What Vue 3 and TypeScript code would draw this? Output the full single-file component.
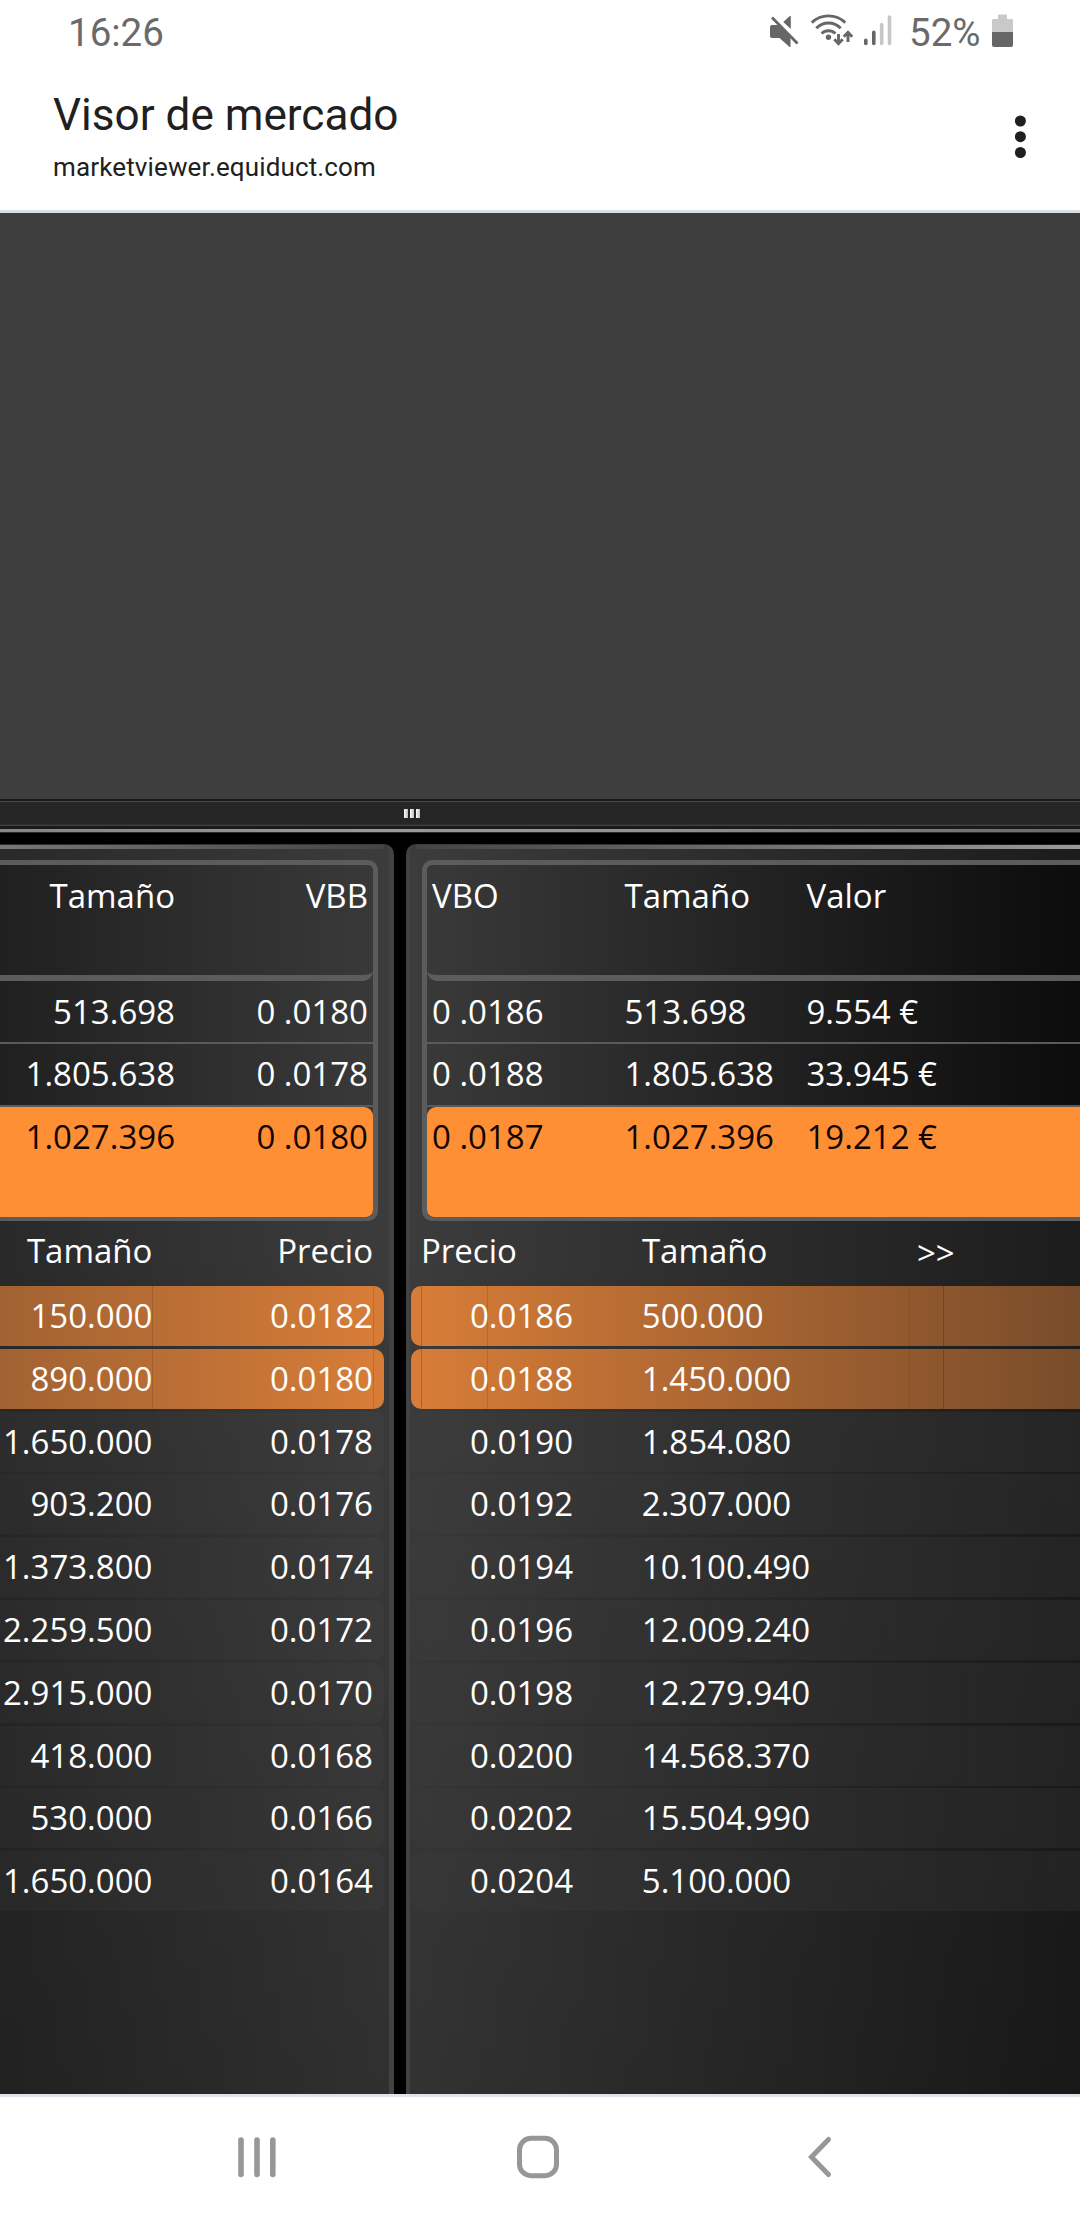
<script setup lang="ts">
interface BestRow {
  price: string
  size: string
  value?: string
}
interface DepthRow {
  price: string
  size: string
}

const bestBids: BestRow[] = [
  { size: '513.698', price: '0 .0180' },
  { size: '1.805.638', price: '0 .0178' },
  { size: '1.027.396', price: '0 .0180' },
]
const bestOffers: BestRow[] = [
  { price: '0 .0186', size: '513.698', value: '9.554 €' },
  { price: '0 .0188', size: '1.805.638', value: '33.945 €' },
  { price: '0 .0187', size: '1.027.396', value: '19.212 €' },
]
const bids: DepthRow[] = [
  { size: '150.000', price: '0.0182' },
  { size: '890.000', price: '0.0180' },
  { size: '1.650.000', price: '0.0178' },
  { size: '903.200', price: '0.0176' },
  { size: '1.373.800', price: '0.0174' },
  { size: '2.259.500', price: '0.0172' },
  { size: '2.915.000', price: '0.0170' },
  { size: '418.000', price: '0.0168' },
  { size: '530.000', price: '0.0166' },
  { size: '1.650.000', price: '0.0164' },
]
const offers: DepthRow[] = [
  { price: '0.0186', size: '500.000' },
  { price: '0.0188', size: '1.450.000' },
  { price: '0.0190', size: '1.854.080' },
  { price: '0.0192', size: '2.307.000' },
  { price: '0.0194', size: '10.100.490' },
  { price: '0.0196', size: '12.009.240' },
  { price: '0.0198', size: '12.279.940' },
  { price: '0.0200', size: '14.568.370' },
  { price: '0.0202', size: '15.504.990' },
  { price: '0.0204', size: '5.100.000' },
]
</script>

<template>
  <div class="screen">
    <header class="top">
      <div class="status">
        <span class="clock">16:26</span>
        <svg class="status-icons" width="124" height="36" viewBox="0 0 124 36">
          <!-- muted speaker -->
          <g fill="#666">
            <path d="M2 12h6.500L20.500 24v10h-1L9.500 25H2a2 2 0 0 1-2-2v-9a2 2 0 0 1 2-2z" />
            <path d="M20.800 3v13L13.300 9 19.500 3.200z" />
          </g>
          <path d="M2 4.500 27.500 30.500" stroke="#666" stroke-width="2.800" />
          <!-- wifi with traffic arrows -->
          <g fill="none" stroke="#666" stroke-width="2.900">
            <path d="M41.800 9.600a24 24 0 0 1 33.400 0" />
            <path d="M46.300 15.200a17 17 0 0 1 24.400 0" />
            <path d="M51.600 20.500a10 10 0 0 1 13.800 0" />
            <path d="M68.500 21v9M64.300 26.200l4.200 4.500 4.200-4.500" />
            <path d="M78 29v-9M73.800 23.800l4.200-4.500 4.200 4.500" />
          </g>
          <circle cx="58.500" cy="24.200" r="2.700" fill="#666" />
          <!-- signal bars -->
          <g stroke-width="3.600" stroke-linecap="round">
            <path d="M95.800 27.200v3.200M103.800 19.400v11" stroke="#666" />
            <path d="M111.700 11.500v18.900M119.500 4v26.400" stroke="#c6c6c6" />
          </g>
        </svg>
        <span class="percent">52%</span>
        <svg class="battery" width="22" height="34" viewBox="0 0 22 34">
          <path d="M6 1.500a1 1 0 0 1 1-1h7a1 1 0 0 1 1 1V5H20a1.500 1.500 0 0 1 1 1.500V18H0V6.500A1.500 1.500 0 0 1 1.500 5H6z" fill="#c9c9c9" />
          <path d="M0 18h21v13a2 2 0 0 1-2 2H2a2 2 0 0 1-2-2z" fill="#666" />
        </svg>
      </div>
      <div class="bar">
        <div class="heading">
          <div class="title">Visor de mercado</div>
          <div class="url">marketviewer.equiduct.com</div>
        </div>
        <svg class="menu" width="12" height="44" viewBox="0 0 12 44" fill="#1f1f1f">
          <circle cx="6.400" cy="6" r="5.500" />
          <circle cx="6.400" cy="21.700" r="5.500" />
          <circle cx="6.400" cy="37.500" r="5.500" />
        </svg>
      </div>
    </header>

    <main class="viewer">
      <div class="blank"></div>
      <div class="splitter">
        <div class="grip"><i></i><i></i><i></i></div>
      </div>
      <div class="rule"></div>
      <div class="panels">
        <section class="panel bid">
          <div class="best">
            <div class="best-head"><span>Tamaño</span><span>VBB</span></div>
            <div v-for="(r, i) in bestBids" :key="i" class="best-row">
              <span>{{ r.size }}</span><span>{{ r.price }}</span>
            </div>
          </div>
          <div class="depth-head"><span>Tamaño</span><span>Precio</span></div>
          <div class="depth">
            <div v-for="(r, i) in bids" :key="i" class="depth-row" :class="{ hot: i < 2 }">
              <span>{{ r.size }}</span><span>{{ r.price }}</span>
            </div>
          </div>
        </section>
        <section class="panel offer">
          <div class="best">
            <div class="best-head"><span>VBO</span><span>Tamaño</span><span>Valor</span></div>
            <div v-for="(r, i) in bestOffers" :key="i" class="best-row">
              <span>{{ r.price }}</span><span>{{ r.size }}</span><span>{{ r.value }}</span>
            </div>
          </div>
          <div class="depth-head"><span>Precio</span><span>Tamaño</span><span class="more">&gt;&gt;</span></div>
          <div class="depth">
            <div v-for="(r, i) in offers" :key="i" class="depth-row" :class="{ hot: i < 2 }">
              <span>{{ r.price }}</span><span>{{ r.size }}</span>
            </div>
          </div>
        </section>
      </div>
    </main>

    <nav class="nav">
      <svg width="38" height="44" viewBox="0 0 38 44" stroke="#979797" stroke-width="5.600" stroke-linecap="round">
        <path d="M3 5v34.500M19 5v34.500M34.800 5v34.500" />
      </svg>
      <svg width="44" height="44" viewBox="0 0 44 44" fill="none" stroke="#979797" stroke-width="5">
        <rect x="3.500" y="3.300" width="37" height="37.400" rx="11.500" />
      </svg>
      <svg width="26" height="44" viewBox="0 0 26 44" fill="none" stroke="#979797" stroke-width="5" stroke-linecap="round">
        <path d="M21.500 4.500 4.500 22l17 17.500" />
      </svg>
    </nav>
  </div>
</template>

<style>
body {
  margin: 0;
}
</style>

<style scoped>
.screen {
  display: flex;
  flex-direction: column;
  width: 1080px;
  height: 2220px;
  overflow: hidden;
  background: #fff;
  font-family: Roboto, sans-serif;
}
.top {
  box-sizing: border-box;
  height: 213px;
  border-bottom: 3px solid #d9e0e8;
}
.status {
  display: flex;
  align-items: flex-start;
  height: 64px;
  padding-left: 68px;
  color: #6a6a6a;
  font-size: 38.5px;
  line-height: 66px;
}
.clock {
  width: 702px;
}
.status-icons {
  margin-top: 13px;
}
.percent {
  width: 83px;
  margin-left: 15px;
}
.battery {
  margin-top: 14px;
}
.bar {
  display: flex;
  justify-content: space-between;
  padding: 26px 54px 0 53px;
  color: #202020;
}
.title {
  font-size: 44.1px;
  line-height: 50px;
}
.url {
  margin-top: 11px;
  font-size: 26px;
  line-height: 32px;
  letter-spacing: 0.14px;
}
.menu {
  margin-top: 25px;
}

.viewer {
  display: flex;
  flex-direction: column;
  height: 1881px;
  background: #000;
  color: #fff;
  font-family: 'Open Sans', sans-serif;
  font-size: 33px;
}
.blank {
  height: 586px;
  background: #3e3e3e;
}
.splitter {
  box-sizing: border-box;
  height: 30px;
  padding: 10px 0 0 404px;
  background: linear-gradient(#1a1a1a 0 2px, #484848 2px 3px, #262626 3px 25px, #2e2e2e 25px 26px, #424242 26px 27px, #1a1a1a 27px);
}
.grip {
  display: flex;
  gap: 2px;
}
.grip i {
  width: 4px;
  height: 9px;
  background: linear-gradient(90deg, #fff, #bbb);
}
.rule {
  height: 3px;
  background: linear-gradient(90deg, #858585, #999 35%, #929292 60%, #686868);
  border-bottom: 1px solid #2c2c2c;
}
.panels {
  display: flex;
  flex: 1;
  gap: 12px;
  padding-top: 11px;
  white-space: pre;
}
.panel {
  box-sizing: border-box;
  padding-top: 16px;
}
.bid {
  width: 394px;
  border-radius: 0 10px 0 0;
  background:
    linear-gradient(90deg, #777, #444) 0 1px / 384px 4px no-repeat,
    linear-gradient(#424242, #424242) right / 5px 100% no-repeat,
    linear-gradient(rgba(0, 0, 0, 0) 30%, rgba(0, 0, 0, 0.2)),
    linear-gradient(90deg, #292929, #3c3c3c);
}
.offer {
  width: 674px;
  border-radius: 10px 0 0 0;
  background:
    linear-gradient(90deg, #444, #999) 10px 1px / 664px 4px no-repeat,
    linear-gradient(#424242, #424242) left / 4px 100% no-repeat,
    linear-gradient(rgba(0, 0, 0, 0) 30%, rgba(0, 0, 0, 0.16)),
    linear-gradient(90deg, #3c3c3c, #1c1c1c);
}
.best {
  box-sizing: border-box;
  height: 361px;
  border: solid #5c5c5c;
}
.bid .best {
  width: 378px;
  border-width: 5px 5px 4px 0;
  border-radius: 0 10px 10px 0;
  background: linear-gradient(90deg, #202020, #393939);
}
.offer .best {
  margin-left: 16px;
  border-width: 5px 0 4px 5px;
  border-radius: 10px 0 0 10px;
  background: linear-gradient(90deg, #393939, #0c0c0c);
}
.best-head,
.best-row,
.depth-head,
.depth-row {
  display: grid;
  box-sizing: border-box;
}
.bid .best > div {
  grid-template-columns: 175px 193px;
  text-align: right;
}
.offer .best > div {
  grid-template-columns: 192.500px 182px 1fr;
  padding-left: 5px;
}
.best-head {
  height: 116px;
  border-bottom: 6px solid #5c5c5c;
  line-height: 61px;
}
.bid .best-head {
  border-bottom-right-radius: 10px;
}
.offer .best-head {
  border-bottom-left-radius: 10px;
}
.best-row {
  height: 63px;
  border-bottom: 2px solid #5a5a5a;
  line-height: 59px;
}
.best-head + .best-row {
  line-height: 61px;
}
.best-row:last-child {
  height: 110px;
  border: 0;
  background: #ff8f35;
  color: #120400;
}
.bid .best-row:last-child {
  border-radius: 0 9px 7px 0;
}
.offer .best-row:last-child {
  border-radius: 9px 0 0 7px;
}
.depth-head {
  height: 65px;
  line-height: 59px;
}
.bid .depth-head,
.bid .depth-row {
  grid-template-columns: 152.400px 220.600px;
  text-align: right;
}
.offer .depth-head {
  grid-template-columns: 220.900px 275px 1fr;
  padding-left: 15px;
}
.more {
  padding-top: 2px;
}
.depth {
  display: flex;
  flex-direction: column;
  gap: 2.800px;
}
.depth-row {
  height: 60px;
  background: rgba(255, 255, 255, 0.022);
  line-height: 59px;
}
.bid .depth-row {
  width: 384px;
  border-radius: 0 10px 10px 0;
}
.offer .depth-row {
  grid-template-columns: 162px 1fr;
  column-gap: 68.800px;
  margin-left: 5px;
  border-radius: 10px 0 0 10px;
  background: linear-gradient(90deg, rgba(255, 255, 255, 0.01), rgba(255, 255, 255, 0.045));
}
.offer .depth-row span:first-child {
  text-align: right;
}
.bid .depth-row.hot {
  background:
    linear-gradient(#0002, #0002) 152px 0 / 1px 100% no-repeat,
    linear-gradient(#0002, #0002) 373px 0 / 1px 100% no-repeat,
    linear-gradient(90deg, #a16232, #d87d38);
}
.offer .depth-row.hot {
  background:
    linear-gradient(#0003, #0003) 10px 0 / 1px 100% no-repeat,
    linear-gradient(#0002, #0002) 76px 0 / 1px 100% no-repeat,
    linear-gradient(#00000009, #00000009) 230px 0 / 1px 100% no-repeat,
    linear-gradient(#0001, #0001) 498px 0 / 1px 100% no-repeat,
    linear-gradient(#0003, #0003) 532px 0 / 1px 100% no-repeat,
    linear-gradient(90deg, #d87d38, #784c2a);
}

.nav {
  display: flex;
  box-sizing: border-box;
  flex: 1;
  align-items: flex-start;
  padding: 38px 0 0 238px;
  border-top: 3px solid #dfe1eb;
}
.nav svg:nth-child(2) {
  margin-left: 240px;
}
.nav svg:nth-child(3) {
  margin-left: 247px;
}
</style>
